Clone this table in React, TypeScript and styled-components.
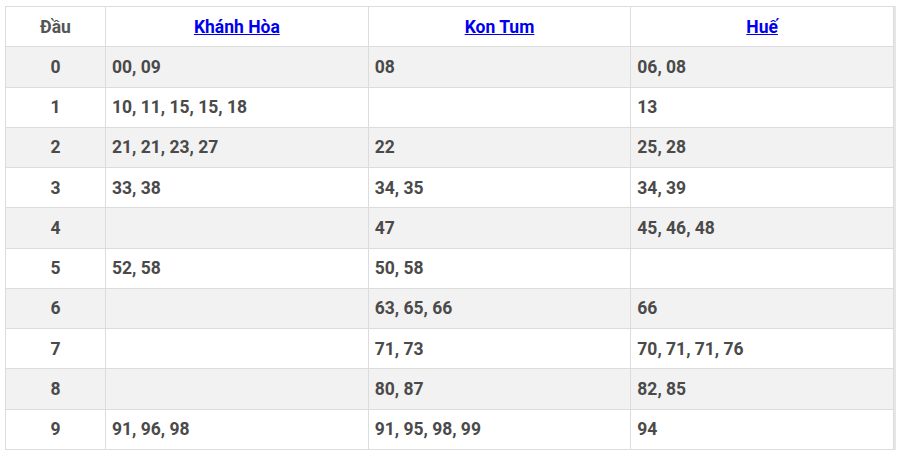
import React from "react"
import styled, { createGlobalStyle } from "styled-components"

const GlobalStyle = createGlobalStyle`
  body {
    margin: 0;
    background: #fff;
    font-family: Roboto, "Open Sans", sans-serif;
  }
`

const Page = styled.div`
  padding: 6px 6px 0 5px;
`

const Table = styled.table`
  width: 889px;
  border-collapse: collapse;
  table-layout: fixed;
  color: #4a4a4a;
  font-size: 17.5px;
  font-weight: 700;
  box-shadow: 2px 0 0 #e6e6e6;
`

const HeadCell = styled.th<{ $w?: number }>`
  box-sizing: border-box;
  width: ${(p) => (p.$w ? `${p.$w}px` : "auto")};
  height: 40.27px;
  border: 1px solid #dcdcdc;
  text-align: center;
  font-weight: 700;
  padding: 0 6px;
  color: #555;
`

const Row = styled.tr<{ $alt: boolean }>`
  background: ${(p) => (p.$alt ? "#f2f2f2" : "#fff")};
`

const Cell = styled.td<{ $center?: boolean }>`
  box-sizing: border-box;
  height: 40.27px;
  border: 1px solid #dcdcdc;
  padding: 0 6px;
  text-align: ${(p) => (p.$center ? "center" : "left")};
  white-space: nowrap;
`

const Link = styled.a`
  color: #0000ee;
  text-decoration: underline;
  font-weight: 700;
`

const provinces = ["Khánh Hòa", "Kon Tum", "Huế"]

const rows: string[][] = [
  ["00, 09", "08", "06, 08"],
  ["10, 11, 15, 15, 18", "", "13"],
  ["21, 21, 23, 27", "22", "25, 28"],
  ["33, 38", "34, 35", "34, 39"],
  ["", "47", "45, 46, 48"],
  ["52, 58", "50, 58", ""],
  ["", "63, 65, 66", "66"],
  ["", "71, 73", "70, 71, 71, 76"],
  ["", "80, 87", "82, 85"],
  ["91, 96, 98", "91, 95, 98, 99", "94"],
]

export default function App() {
  return (
    <>
      <GlobalStyle />
      <Page>
        <Table>
          <thead>
            <tr>
              <HeadCell $w={100}>Đầu</HeadCell>
              {provinces.map((p) => (
                <HeadCell key={p}>
                  <Link href="#">{p}</Link>
                </HeadCell>
              ))}
            </tr>
          </thead>
          <tbody>
            {rows.map((r, i) => (
              <Row key={i} $alt={i % 2 === 0}>
                <Cell $center>{i}</Cell>
                {r.map((v, j) => (
                  <Cell key={j}>{v}</Cell>
                ))}
              </Row>
            ))}
          </tbody>
        </Table>
      </Page>
    </>
  )
}
